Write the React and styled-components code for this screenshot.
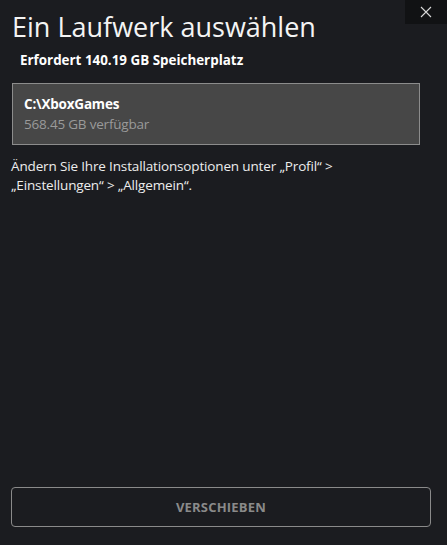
import styled, { createGlobalStyle } from "styled-components";

const Global = createGlobalStyle`
  html, body {
    margin: 0;
    padding: 0;
    background: #1b1c20;
  }
  body {
    font-family: "Open Sans", "Noto Sans", sans-serif;
    color: #ffffff;
  }
`;

const Dialog = styled.div`
  position: relative;
  width: 447px;
  height: 545px;
  box-sizing: border-box;
  background: #1b1c20;
  display: flex;
  flex-direction: column;
  padding: 8px 16px 18px 11px;
`;

const CloseButton = styled.button`
  position: absolute;
  top: 0;
  right: 0;
  width: 42px;
  height: 24px;
  border: none;
  background: #111214;
  display: flex;
  align-items: center;
  justify-content: center;
  padding: 0;
  cursor: pointer;
`;

const Title = styled.h1`
  margin: 0 0 0 1px;
  font-size: 27px;
  font-weight: 400;
  line-height: 38px;
  color: #f4f4f4;
`;

const Requirement = styled.div`
  margin: 5px 0 0 9px;
  font-size: 13.4px;
  font-weight: 700;
  line-height: 18px;
`;

const DriveCard = styled.div`
  margin: 14px 0 0 1px;
  width: 408px;
  height: 62px;
  box-sizing: border-box;
  background: #474747;
  border: 1px solid #8c8c8c;
  padding: 10px 11px;
  display: flex;
  flex-direction: column;
  justify-content: center;
`;

const DriveName = styled.div`
  font-size: 13.5px;
  font-weight: 700;
  line-height: 20px;
  letter-spacing: -0.2px;
  color: #ffffff;
`;

const DriveSpace = styled.div`
  font-size: 13.5px;
  line-height: 20px;
  letter-spacing: -0.2px;
  color: #9a9a9a;
`;

const Hint = styled.p`
  margin: 12px 0 0 0;
  font-size: 13.5px;
  line-height: 19px;
  letter-spacing: -0.15px;
  color: #ededed;
`;

const Spacer = styled.div`
  flex: 1;
`;

const MoveButton = styled.button`
  width: 420px;
  height: 40px;
  border: 1px solid #8a8a8a;
  border-radius: 4px;
  background: transparent;
  color: #8a8a8a;
  font-family: "Open Sans", "Noto Sans", sans-serif;
  font-size: 13px;
  font-weight: 700;
  letter-spacing: 0.2px;
`;

export default function App() {
  return (
    <>
      <Global />
      <Dialog>
        <CloseButton aria-label="Schließen">
          <svg width="12" height="12" viewBox="0 0 12 12">
            <path d="M1 1 L11 11 M11 1 L1 11" stroke="#d8d8d8" strokeWidth="1.1" />
          </svg>
        </CloseButton>
        <Title>Ein Laufwerk auswählen</Title>
        <Requirement>Erfordert 140.19 GB Speicherplatz</Requirement>
        <DriveCard>
          <DriveName>C:\XboxGames</DriveName>
          <DriveSpace>568.45 GB verfügbar</DriveSpace>
        </DriveCard>
        <Hint>
          Ändern Sie Ihre Installationsoptionen unter „Profil“ &gt;
          <br />
          „Einstellungen“ &gt; „Allgemein“.
        </Hint>
        <Spacer />
        <MoveButton>VERSCHIEBEN</MoveButton>
      </Dialog>
    </>
  );
}
